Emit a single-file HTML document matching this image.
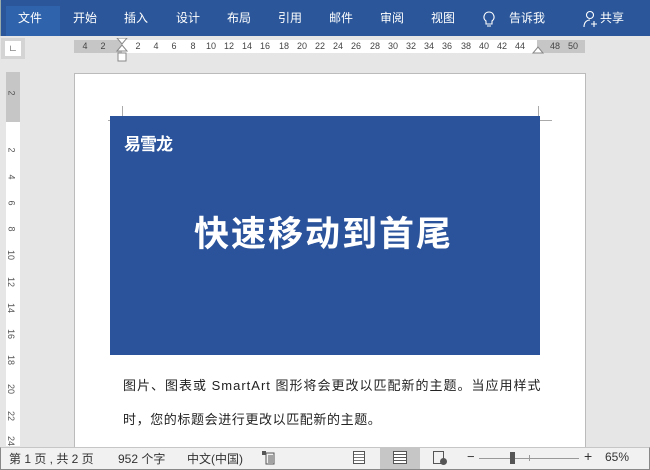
<!DOCTYPE html>
<html><head><meta charset="utf-8"><style>
*{margin:0;padding:0;box-sizing:border-box}
body{width:650px;height:470px;overflow:hidden;background:#e6e6e6;font-family:"Liberation Sans","Noto Sans CJK SC",sans-serif;position:relative}
.a{position:absolute}
.top{left:0;top:0;width:650px;height:36px;background:#2b579a;border-left:1px solid #9aa}
.tab{top:0;height:36px;line-height:36px;color:#fff;font-size:12px}
.r{position:absolute;top:40px;height:13px;width:16px;text-align:center;font-size:9px;color:#444;line-height:13px}
.vr{left:6px;width:14px}
.num{position:absolute;font-size:9px;color:#555;transform:rotate(90deg)}
.st{position:absolute;top:450px;font-size:12px;color:#333;white-space:pre}
</style></head><body>
<div class="a top"></div>
<div class="a" style="left:6px;top:6px;width:54px;height:30px;background:#2f63ab"></div>
<div class="a tab" style="left:18px">文件</div>
<div class="a tab" style="left:73px">开始</div>
<div class="a tab" style="left:124px">插入</div>
<div class="a tab" style="left:176px">设计</div>
<div class="a tab" style="left:227px">布局</div>
<div class="a tab" style="left:278px">引用</div>
<div class="a tab" style="left:329px">邮件</div>
<div class="a tab" style="left:380px">审阅</div>
<div class="a tab" style="left:431px">视图</div>
<svg class="a" style="left:483px;top:11px" width="12" height="18" viewBox="0 0 12 18"><path d="M6 1a5 5 0 0 0-3 9v3h6v-3a5 5 0 0 0-3-9zM4 15h4" fill="none" stroke="#fff" stroke-width="1.1"/></svg>
<div class="a tab" style="left:509px">告诉我</div>
<svg class="a" style="left:583px;top:10px" width="16" height="18" viewBox="0 0 16 18"><circle cx="7" cy="5" r="3.5" fill="none" stroke="#fff" stroke-width="1.1"/><path d="M1 17c0-5 3-7 6-7M11 11v6M8 14h6" fill="none" stroke="#fff" stroke-width="1.1"/></svg>
<div class="a tab" style="left:600px">共享</div>
<div class="a" style="left:1px;top:38px;width:24px;height:21px;background:#d4d4d4"></div>
<div class="a" style="left:5px;top:41px;width:16px;height:15px;background:#fff;font-size:9px;font-weight:bold;text-align:center;line-height:15px">∟</div>
<div class="a" style="left:74px;top:40px;width:511px;height:13px;background:#c6c6c6"></div>
<div class="a" style="left:122px;top:40px;width:415px;height:13px;background:#fff"></div>
<div class="r" style="left:77px">4</div><div class="r" style="left:95px">2</div>
<div class="r" style="left:130px">2</div><div class="r" style="left:148px">4</div><div class="r" style="left:166px">6</div><div class="r" style="left:185px">8</div><div class="r" style="left:203px">10</div><div class="r" style="left:221px">12</div><div class="r" style="left:239px">14</div><div class="r" style="left:257px">16</div><div class="r" style="left:276px">18</div><div class="r" style="left:294px">20</div><div class="r" style="left:312px">22</div><div class="r" style="left:330px">24</div><div class="r" style="left:348px">26</div><div class="r" style="left:367px">28</div><div class="r" style="left:385px">30</div><div class="r" style="left:403px">32</div><div class="r" style="left:421px">34</div><div class="r" style="left:439px">36</div><div class="r" style="left:458px">38</div><div class="r" style="left:476px">40</div><div class="r" style="left:494px">42</div><div class="r" style="left:512px">44</div>
<div class="r" style="left:547px">48</div><div class="r" style="left:565px">50</div>
<svg class="a" style="left:116px;top:38px" width="12" height="24"><path d="M1 0h10L6 6zM1 13L6 7l5 6zM2 15h8v8H2z" fill="#fff" stroke="#888"/></svg>
<svg class="a" style="left:532px;top:46px" width="12" height="8"><path d="M1 7L6 1l5 6z" fill="#fff" stroke="#888"/></svg>
<div class="a vr" style="top:72px;height:50px;background:#c6c6c6"></div>
<div class="a vr" style="top:122px;height:324px;background:#fff"></div>
<div class="a num" style="left:9px;top:88px">2</div>
<div class="a num" style="left:9px;top:145px">2</div>
<div class="a num" style="left:9px;top:172px">4</div>
<div class="a num" style="left:9px;top:198px">6</div>
<div class="a num" style="left:9px;top:224px">8</div>
<div class="a num" style="left:6px;top:250px">10</div>
<div class="a num" style="left:6px;top:277px">12</div>
<div class="a num" style="left:6px;top:303px">14</div>
<div class="a num" style="left:6px;top:329px">16</div>
<div class="a num" style="left:6px;top:355px">18</div>
<div class="a num" style="left:6px;top:384px">20</div>
<div class="a num" style="left:6px;top:411px">22</div>
<div class="a num" style="left:6px;top:436px">24</div>
<div class="a" style="left:74px;top:73px;width:512px;height:380px;background:#fff;border:1px solid #bbb"></div>
<div class="a" style="left:122px;top:106px;width:1px;height:14px;background:#aaa"></div>
<div class="a" style="left:108px;top:120px;width:14px;height:1px;background:#aaa"></div>
<div class="a" style="left:538px;top:106px;width:1px;height:14px;background:#aaa"></div>
<div class="a" style="left:538px;top:120px;width:14px;height:1px;background:#aaa"></div>
<div class="a" style="left:110px;top:116px;width:430px;height:239px;background:#2a539b"></div>
<div class="a" style="left:124px;top:130px;color:#fff;font-size:17px;font-weight:bold;letter-spacing:-1px">易雪龙</div>
<div class="a" style="left:194px;top:214px;color:#fff;font-size:35px;font-weight:bold;letter-spacing:2px;line-height:42px">快速移动到首尾</div>
<div class="a" style="left:123px;top:375px;font-size:13px;color:#222;letter-spacing:1px;white-space:nowrap">图片、图表或 SmartArt 图形将会更改以匹配新的主题。当应用样式</div>
<div class="a" style="left:123px;top:409px;font-size:13px;color:#222;letter-spacing:0.6px;white-space:nowrap">时，您的标题会进行更改以匹配新的主题。</div>
<div class="a" style="left:0;top:447px;width:650px;height:23px;background:#f1f1f1;border-top:1px solid #c6c6c6;border-bottom:1px solid #888;border-left:1px solid #888;border-right:1px solid #888"></div>
<div class="a" style="left:380px;top:448px;width:40px;height:21px;background:#c6c6c6"></div>
<div class="st" style="left:9px">第 1 页 , 共 2 页</div>
<div class="st" style="left:118px">952 个字</div>
<div class="st" style="left:187px">中文(中国)</div>
<svg class="a" style="left:261px;top:450px" width="14" height="15"><rect x="1" y="1" width="4" height="4" fill="#555"/><rect x="5" y="3" width="8" height="11" fill="none" stroke="#555"/><path d="M7 6h5M7 8h5M7 10h5M7 12h5" stroke="#555"/></svg>
<div class="a" style="left:353px;top:451px;width:12px;height:13px;border:1px solid #555;background:repeating-linear-gradient(#fff 0 2px,#777 2px 3px)"></div>
<div class="a" style="left:393px;top:451px;width:14px;height:13px;border:1px solid #555;background:repeating-linear-gradient(#fff 0 2px,#555 2px 3px)"></div>
<div class="a" style="left:433px;top:451px;width:11px;height:13px;border:1px solid #555"></div>
<div class="a" style="left:440px;top:458px;width:7px;height:7px;border-radius:50%;background:#555"></div>
<div class="a" style="left:467px;top:449px;font-size:13px;color:#333">−</div>
<div class="a" style="left:479px;top:458px;width:100px;height:1px;background:#999"></div>
<div class="a" style="left:510px;top:452px;width:5px;height:12px;background:#555"></div>
<div class="a" style="left:529px;top:455px;width:1px;height:6px;background:#999"></div>
<div class="a" style="left:584px;top:448px;font-size:14px;color:#333">+</div>
<div class="a" style="left:605px;top:450px;font-size:12px;color:#333">65%</div>
</body></html>
